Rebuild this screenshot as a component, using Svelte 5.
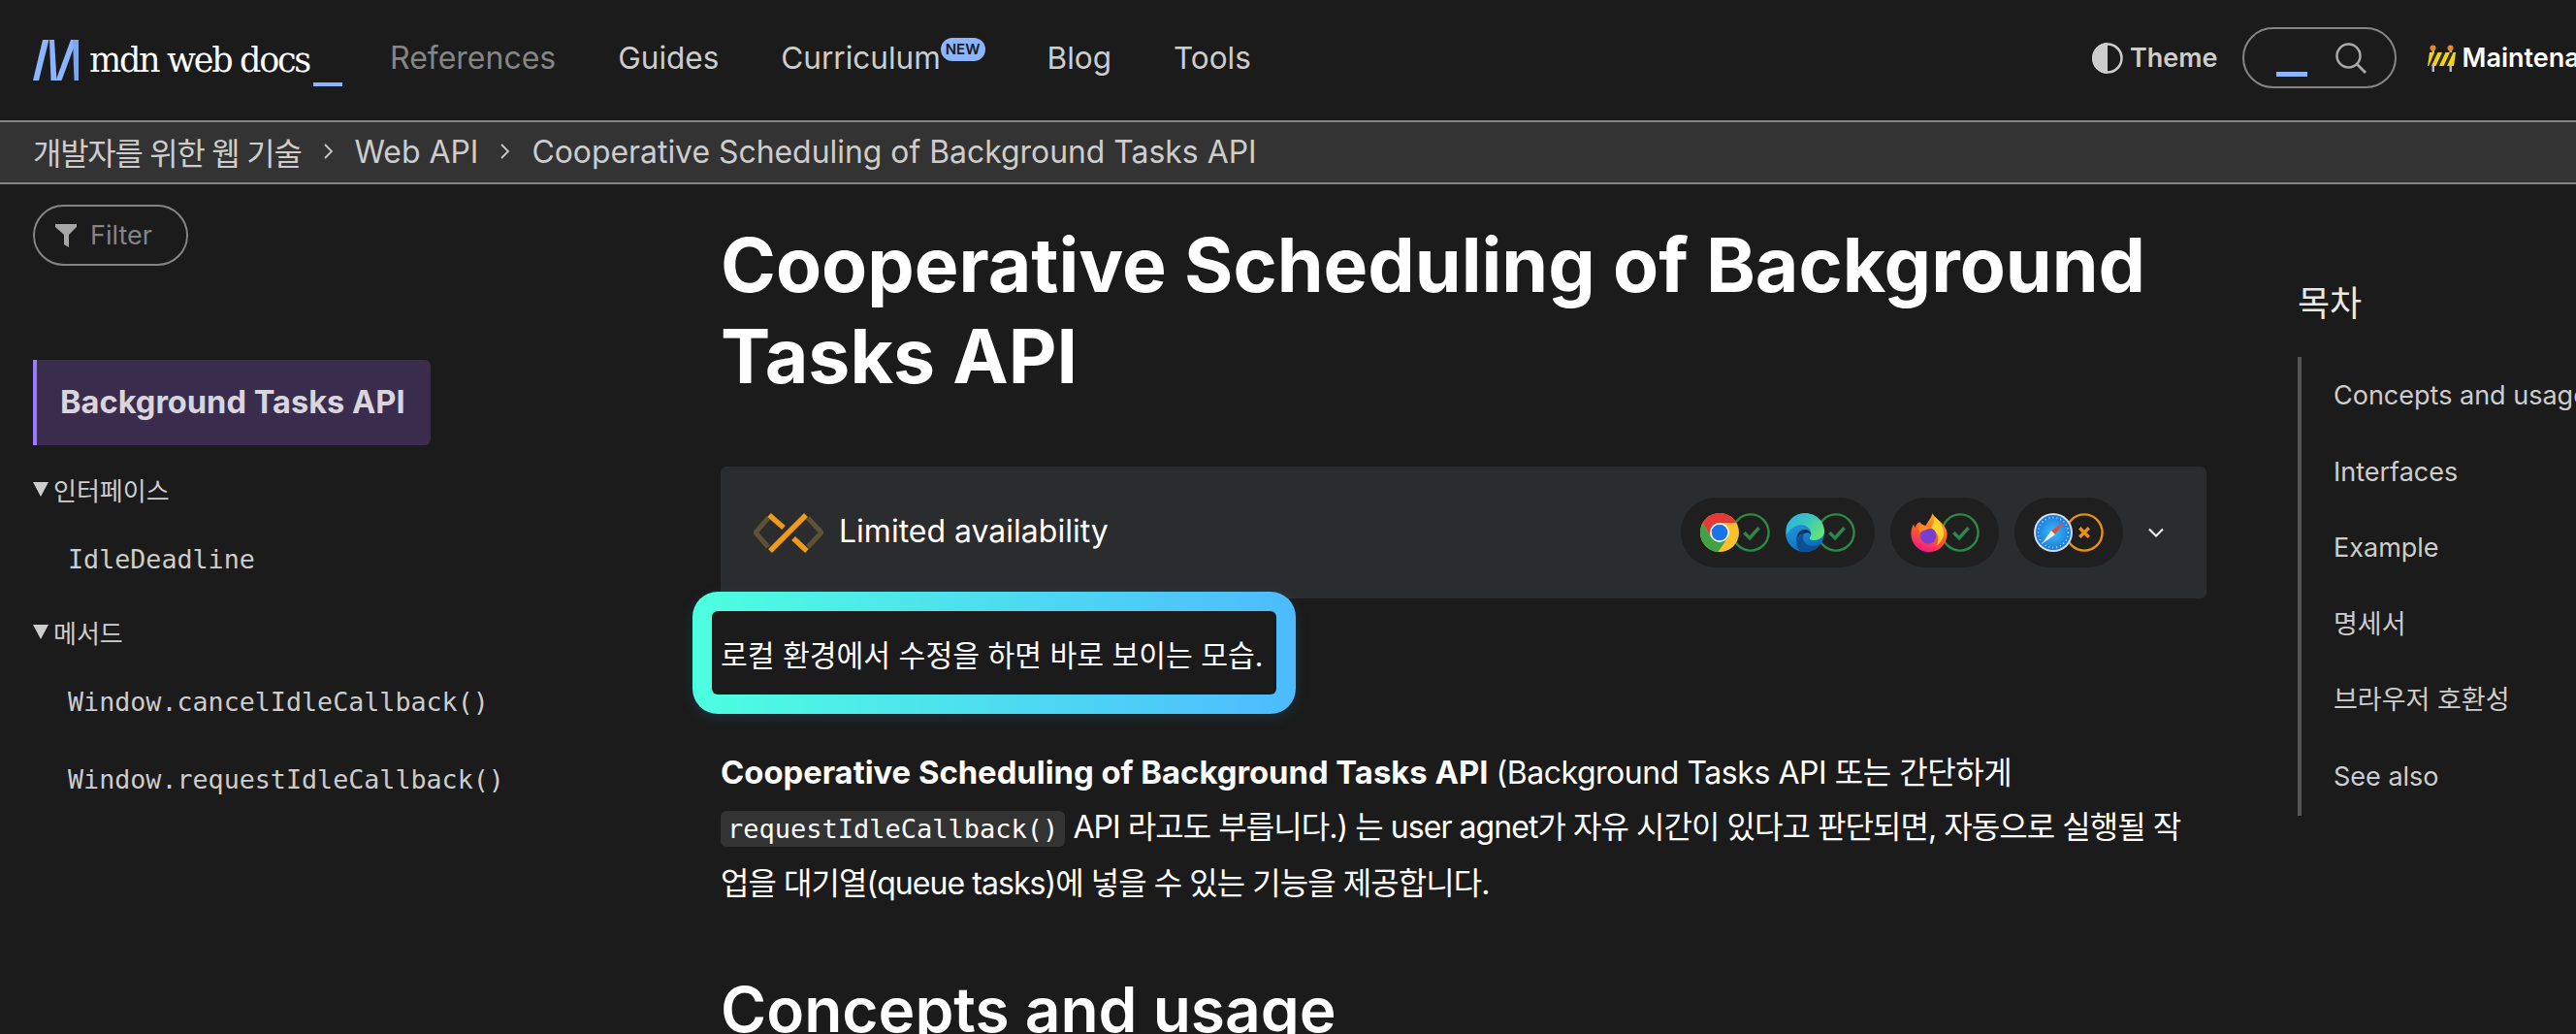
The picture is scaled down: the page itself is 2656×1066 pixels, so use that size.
<script>
  const nav = ['Guides', 'Curriculum', 'Blog', 'Tools'];
  const toc = ['Concepts and usage', 'Interfaces', 'Example', '명세서', '브라우저 호환성', 'See also'];
</script>

<div class="page">
  <header class="top">
    <a class="logo" href="#top">
      <svg class="mark" viewBox="0 0 47 42" aria-hidden="true">
        <path d="M10 0h6.500L6 42H0z" fill="#8cb4ff" />
        <path d="M17 0h5L24.500 42H18.500z" fill="#8cb4ff" />
        <path d="M23.500 42h6L45 0h-6z" fill="#8cb4ff" />
        <path d="M41 0H47v42h-4.500z" fill="#7fa5ee" />
      </svg>
      <span class="word">mdn web docs</span>
      <span class="cursor"></span>
    </a>
    <nav class="menu">
      <a class="dim" href="#top">References</a>
      {#each nav as item}
        <a href="#top">{item}{#if item === 'Curriculum'}<span class="new">NEW</span>{/if}</a>
      {/each}
    </nav>
    <div class="tools">
      <button class="theme">
        <svg width="32" height="32" viewBox="0 0 32 32" aria-hidden="true">
          <circle cx="16" cy="16" r="14.500" fill="none" stroke="#cdcdcd" stroke-width="2.500" />
          <path d="M16 0a16 16 0 0 0 0 32z" fill="#cdcdcd" />
        </svg>
        Theme
      </button>
      <div class="search">
        <span class="cursor small"></span>
        <svg width="32" height="32" viewBox="0 0 32 32" aria-hidden="true">
          <circle cx="13.500" cy="13.500" r="12" fill="none" stroke="#a9a9a9" stroke-width="2.500" />
          <path d="M22 22l9 9" stroke="#a9a9a9" stroke-width="2.800" fill="none" />
        </svg>
      </div>
      <div class="maint">
        <svg width="29" height="28" viewBox="0 0 29 28" aria-hidden="true">
          <path d="M4.500 6h2.500v22H4.500zM22.500 6H25v22h-2.500z" fill="#b9b9b9" />
          <circle cx="5.500" cy="3.500" r="3" fill="#e8872a" />
          <circle cx="23.500" cy="3.500" r="3" fill="#e8872a" />
          <path d="M2 8h27l-2 14H0z" fill="#f2d21f" />
          <path d="M7 8h3.500L4 22H1zM15 8h3.500l-6.500 14H8.500zM23 8h3.500L20 22h-3.500z" fill="#2a2a1a" />
        </svg>
        Maintenance
      </div>
    </div>
  </header>

  <div class="crumbs">
    <a class="ko" href="#top">개발자를 위한 웹 기술</a>
    <svg class="sep" width="11" height="16" viewBox="0 0 11 16" aria-hidden="true"><path d="M2 1l7 7-7 7" fill="none" stroke="#c8c8c8" stroke-width="1.800" /></svg>
    <a href="#top">Web API</a>
    <svg class="sep" width="11" height="16" viewBox="0 0 11 16" aria-hidden="true"><path d="M2 1l7 7-7 7" fill="none" stroke="#c8c8c8" stroke-width="1.800" /></svg>
    <a href="#top">Cooperative Scheduling of Background Tasks API</a>
  </div>

  <div class="layout">
    <aside class="side">
      <div class="filter">
        <svg width="22" height="26" viewBox="0 0 22 26" aria-hidden="true"><path d="M0 1h22v3l-8 8v13l-5 -3V12L0 4z" fill="#a6a6a6" /></svg>
        <span>Filter</span>
      </div>
      <div class="current">Background Tasks API</div>
      <div class="group"><span class="tri"></span>인터페이스</div>
      <a class="api first" href="#top">IdleDeadline</a>
      <div class="group second"><span class="tri"></span>메서드</div>
      <a class="api first" href="#top">Window.cancelIdleCallback()</a>
      <a class="api" href="#top">Window.requestIdleCallback()</a>
    </aside>

    <main class="content">
      <h1>Cooperative Scheduling of Background Tasks API</h1>

      <section class="baseline">
        <svg class="limited" width="72" height="41" viewBox="0 0 72 41" aria-hidden="true">
          <path d="M15 5L2 20l13 15M56 5l14 15-14 15" fill="none" stroke="#5f5136" stroke-width="5" />
          <path d="M16 2l15 13M54 2L17 39M41 26l14 13" fill="none" stroke="#ee9a1d" stroke-width="5.500" />
        </svg>
        <span class="label">Limited availability</span>
        <div class="browsers">
          <div class="pill">
            <div class="support">
              <svg class="logo-b" viewBox="0 0 48 48" aria-hidden="true">
                <circle cx="24" cy="24" r="24" fill="#fbc02d" />
                <path d="M24 0C15 0 7.500 4.800 3.200 12l10.400 18L24 12h20.800C40.600 4.800 33 0 24 0z" fill="#e53935" />
                <path d="M3.200 12A24 24 0 0 0 22 48l12.400-18H13.600z" fill="#43a047" />
                <circle cx="24" cy="24" r="12" fill="#fff" />
                <circle cx="24" cy="24" r="10" fill="#1a73e8" />
              </svg>
              <svg class="ring" viewBox="0 0 42 42" aria-hidden="true">
                <circle cx="21" cy="21" r="19.500" fill="none" stroke="#2a8a46" stroke-width="2.500" />
                <path d="M14 21l6 6 10-11" fill="none" stroke="#2a8a46" stroke-width="3.500" />
              </svg>
            </div>
            <div class="support">
              <svg class="logo-b" viewBox="0 0 40 40" aria-hidden="true">
                <defs>
                  <linearGradient id="edgeA" x1="0" y1="0" x2="0.500" y2="1"><stop offset="0" stop-color="#2aa8e4" /><stop offset="1" stop-color="#0b6cc0" /></linearGradient>
                  <linearGradient id="edgeB" x1="0" y1="0" x2="1" y2="0.600"><stop offset="0" stop-color="#2fb0dc" /><stop offset="0.500" stop-color="#38c4c0" /><stop offset="1" stop-color="#62e27c" /></linearGradient>
                </defs>
                <circle cx="20" cy="20" r="20" fill="url(#edgeA)" />
                <path d="M17 40C9 36 10 24 19 21c-3 6 1 12 8 13 4 .5 8-1 10.500-4C34 36 27 40 20 40z" fill="#0d4f92" />
                <path d="M1 14C5 5 12 0 20 0c12 0 20 9 20 19 0 6-6 9-11 9-3 0-5-1-4-3 2-2 2-5 0-8-3-5-9-6-14-4-4 2-8 5-10 9z" fill="url(#edgeB)" />
                <path d="M19 21c-5 1-8 5-7 10-2-6 1-14 8-14 3 0 6 2 6 5-2-2-4-2-7-1z" fill="#0b2f57" />
              </svg>
              <svg class="ring" viewBox="0 0 42 42" aria-hidden="true">
                <circle cx="21" cy="21" r="19.500" fill="none" stroke="#2a8a46" stroke-width="2.500" />
                <path d="M14 21l6 6 10-11" fill="none" stroke="#2a8a46" stroke-width="3.500" />
              </svg>
            </div>
          </div>
          <div class="pill">
            <div class="support">
              <svg class="logo-b" viewBox="0 0 40 43" aria-hidden="true">
                <defs>
                  <linearGradient id="foxA" x1="0.700" y1="0" x2="0.300" y2="1"><stop offset="0" stop-color="#ffb01f" /><stop offset="0.550" stop-color="#ff5a2a" /><stop offset="1" stop-color="#f0158c" /></linearGradient>
                </defs>
                <path d="M24 0c1 4 4 5 9 10 4 4 7 9 7 13 0 11-9 20-20 20S0 34 0 23c0-4 1-8 3-11 0 2 1 3 2 4 0-3 3-6 5-6 1 2 3 3 6 4 3-5 6-8 8-14z" fill="url(#foxA)" />
                <path d="M26 4c4 3 9 9 10 16 1 7-3 13-8 16 3-5 3-10 0-14-1-2-4-4-7-5 3-3 5-8 5-13z" fill="#ffd22e" />
                <circle cx="19" cy="25" r="9" fill="#7a3fd0" />
                <path d="M10 12c3 2 7 3 13 4-4 2-11 3-13 6-2-3-2-7 0-10z" fill="#ff8a20" />
              </svg>
              <svg class="ring" viewBox="0 0 42 42" aria-hidden="true">
                <circle cx="21" cy="21" r="19.500" fill="none" stroke="#2a8a46" stroke-width="2.500" />
                <path d="M14 21l6 6 10-11" fill="none" stroke="#2a8a46" stroke-width="3.500" />
              </svg>
            </div>
          </div>
          <div class="pill">
            <div class="support">
              <svg class="logo-b" viewBox="0 0 40 40" aria-hidden="true">
                <defs>
                  <radialGradient id="safA"><stop offset="0" stop-color="#3cc0f5" /><stop offset="1" stop-color="#1a78e0" /></radialGradient>
                </defs>
                <circle cx="20" cy="20" r="20" fill="#d5dde6" />
                <circle cx="20" cy="20" r="18" fill="url(#safA)" />
                <circle cx="20" cy="20" r="15.500" fill="none" stroke="#cfe6fb" stroke-width="1.500" stroke-dasharray="1 3" />
                <path d="M32 8L18 18l4 4z" fill="#e8483f" />
                <path d="M8 32l10-14 4 4z" fill="#f2f2f2" />
              </svg>
              <svg class="ring" viewBox="0 0 42 42" aria-hidden="true">
                <circle cx="21" cy="21" r="19.500" fill="none" stroke="#e8900f" stroke-width="2.500" />
                <path d="M16 16l10 10M26 16L16 26" fill="none" stroke="#e8900f" stroke-width="3.500" />
              </svg>
            </div>
          </div>
          <svg class="chev" width="16" height="10" viewBox="0 0 16 10" aria-hidden="true"><path d="M1 1.500l7 7 7-7" fill="none" stroke="#fff" stroke-width="2" /></svg>
        </div>
      </section>

      <p class="note">
        <span class="frame"></span>
        <span class="note-text">로컬 환경에서 수정을 하면 바로 보이는 모습.</span>
      </p>

      <p class="lead">
        <strong>Cooperative Scheduling of Background Tasks API</strong> <span class="first-line">(Background Tasks API 또는 간단하게</span> <code>requestIdleCallback()</code> API 라고도 부릅니다.) 는 user agnet가 자유 시간이 있다고 판단되면, 자동으로 실행될 작<wbr />업을 대기열(queue tasks)에 넣을 수 있는 기능을 제공합니다.
      </p>

      <h2>Concepts and usage</h2>
    </main>

    <aside class="toc">
      <h2 class="toc-title">목차</h2>
      <ul>
        {#each toc as item}
          <li><a href="#top">{item}</a></li>
        {/each}
      </ul>
    </aside>
  </div>
</div>

<style>
  :global(body) {
    margin: 0;
    background: #1b1b1b;
  }

  .page {
    width: 2656px;
    height: 1066px;
    overflow: hidden;
    background: #1b1b1b;
    color: #fff;
    font-family: Inter, "Noto Sans CJK KR", sans-serif;
  }

  a {
    color: inherit;
    text-decoration: none;
  }

  .top {
    display: flex;
    align-items: flex-start;
    height: 124px;
    padding-left: 34px;
    box-sizing: border-box;
  }

  .logo {
    display: flex;
    align-items: flex-start;
    flex: none;
    padding-top: 41px;
  }

  .mark {
    width: 47px;
    height: 42px;
  }

  .word {
    margin: 0 0 0 11px;
    width: 226px;
    font-family: "DejaVu Serif", serif;
    font-size: 35px;
    letter-spacing: -2.300px;
    line-height: 42px;
    white-space: nowrap;
  }

  .cursor {
    display: block;
    width: 30px;
    height: 4px;
    margin: 44px 0 0 5px;
    background: #8cb4ff;
  }

  .menu {
    display: flex;
    gap: 64px;
    flex: none;
    margin-left: 49px;
    padding-top: 38px;
    color: #cdcdcd;
    font-size: 31.500px;
    line-height: 44px;
  }

  .menu .dim {
    color: #858585;
    font-size: 32px;
  }

  .new {
    display: inline-block;
    vertical-align: 15px;
    height: 24px;
    padding: 0 5px;
    border-radius: 12px;
    background: #8cb4ff;
    color: #1b1b1b;
    font-size: 15px;
    font-weight: 600;
    line-height: 24px;
  }

  .tools {
    display: flex;
    flex: none;
    align-items: center;
    margin: 28px 0 0 867px;
  }

  .theme {
    display: flex;
    align-items: center;
    gap: 7px;
    padding: 0;
    border: 0;
    background: none;
    color: #cdcdcd;
    font: 600 27px Inter, sans-serif;
  }

  .search {
    display: flex;
    align-items: center;
    justify-content: space-between;
    box-sizing: border-box;
    width: 159px;
    height: 63px;
    margin-left: 26px;
    padding: 0 29px 0 33px;
    border: 2px solid #858585;
    border-radius: 32px;
  }

  .cursor.small {
    width: 32px;
    height: 5px;
    margin: 33px 0 0;
  }

  .maint {
    display: flex;
    align-items: center;
    gap: 6px;
    margin-left: 32px;
    font-size: 27px;
    font-weight: 600;
    white-space: nowrap;
  }

  .crumbs {
    display: flex;
    align-items: center;
    gap: 22px;
    box-sizing: border-box;
    height: 66px;
    padding: 0 0 2px 34px;
    border-top: 2px solid #858585;
    border-bottom: 2px solid #858585;
    background: #333;
    color: #cdcdcd;
    font-size: 31.900px;
  }

  .crumbs .ko {
    letter-spacing: -1.200px;
  }

  .layout {
    display: grid;
    grid-template-columns: 743px 1532px 1fr;
  }

  .side {
    padding: 21px 0 0 34px;
    color: #cdcdcd;
  }

  .filter {
    display: flex;
    align-items: center;
    gap: 14px;
    box-sizing: border-box;
    width: 160px;
    height: 63px;
    padding-left: 21px;
    border: 2px solid #858585;
    border-radius: 32px;
    color: #858585;
    font-size: 27px;
  }

  .current {
    box-sizing: border-box;
    width: 410px;
    height: 88px;
    margin-top: 97px;
    padding-left: 24px;
    border-left: 4px solid #9b7bff;
    border-radius: 0 6px 6px 0;
    background: #3a2c4d;
    color: #d9d5dd;
    font-size: 32.600px;
    font-weight: 700;
    line-height: 86px;
  }

  .group {
    display: flex;
    align-items: center;
    height: 36px;
    margin-top: 27px;
    font-size: 26px;
  }

  .group.second {
    margin-top: 38px;
  }

  .tri {
    width: 0;
    height: 0;
    margin-right: 5px;
    border-left: 8px solid transparent;
    border-right: 8px solid transparent;
    border-top: 15px solid #cdcdcd;
  }

  .api {
    display: block;
    height: 36px;
    margin: 44px 0 0 36px;
    font-family: "DejaVu Sans Mono", monospace;
    font-size: 26.700px;
    line-height: 36px;
    white-space: nowrap;
  }

  .api.first {
    margin-top: 37px;
  }

  h1 {
    margin: 0;
    padding-top: 37px;
    font-size: 76.900px;
    font-weight: 700;
    line-height: 94px;
  }

  .baseline {
    display: flex;
    align-items: center;
    height: 136px;
    margin-top: 66px;
    padding-left: 34px;
    box-sizing: border-box;
    border-radius: 6px;
    background: #2b2c2e;
  }

  .label {
    margin: 0 0 3px 16px;
    font-size: 32px;
  }

  .browsers {
    display: flex;
    align-items: center;
    gap: 16px;
    margin-left: auto;
    padding-right: 44px;
  }

  .pill {
    display: flex;
    align-items: center;
    gap: 16px;
    height: 72px;
    padding: 0 20px;
    border-radius: 36px;
    background: #1f1f20;
  }

  .support {
    position: relative;
    display: flex;
    align-items: center;
    width: 72px;
  }

  .logo-b {
    position: relative;
    z-index: 1;
    width: 40px;
    height: 40px;
  }

  .ring {
    position: absolute;
    right: 0;
    width: 40px;
    height: 40px;
  }

  .chev {
    margin-left: 10px;
  }

  .note {
    position: relative;
    margin: 0;
    padding-top: 37px;
    font-size: 30.200px;
    line-height: 44px;
  }

  .note-text {
    position: relative;
  }

  /* highlight drawn on top of the screenshot */
  .frame {
    position: absolute;
    left: -29px;
    top: -7px;
    width: 622px;
    height: 126px;
    box-sizing: border-box;
    border: 20px solid transparent;
    border-radius: 26px;
    background: linear-gradient(#1b1b1b, #1b1b1b) padding-box, linear-gradient(90deg, #4dffe0, #4dbbff) border-box;
    box-shadow: 0 4px 14px rgba(40, 150, 200, 0.180);
  }

  .lead {
    margin: 70px 0 0;
    font-size: 32px;
    letter-spacing: -0.950px;
    line-height: 56px;
  }

  .lead strong {
    font-size: 32.800px;
    font-weight: 700;
    letter-spacing: 0;
  }

  .first-line {
    letter-spacing: -0.450px;
  }

  code {
    padding: 3px 7px;
    border-radius: 6px;
    background: #333;
    font-family: "DejaVu Sans Mono", monospace;
    font-size: 27px;
    letter-spacing: 0;
  }

  .content h2 {
    margin: 66px 0 0;
    font-size: 64px;
    font-weight: 600;
    line-height: 72px;
  }

  .toc {
    padding: 98px 0 0 94px;
  }

  .toc-title {
    margin: 0;
    font-size: 36px;
    font-weight: 400;
    line-height: 50px;
    color: #e8e8e8;
  }

  .toc ul {
    margin: 30px 0 0;
    padding: 1px 0 0 33px;
    width: 400px;
    height: 473px;
    box-sizing: border-box;
    border-left: 4px solid #555;
    list-style: none;
    color: #cdcdcd;
    font-size: 27px;
    white-space: nowrap;
  }

  .toc li {
    height: 78.500px;
    line-height: 78.500px;
  }
</style>
